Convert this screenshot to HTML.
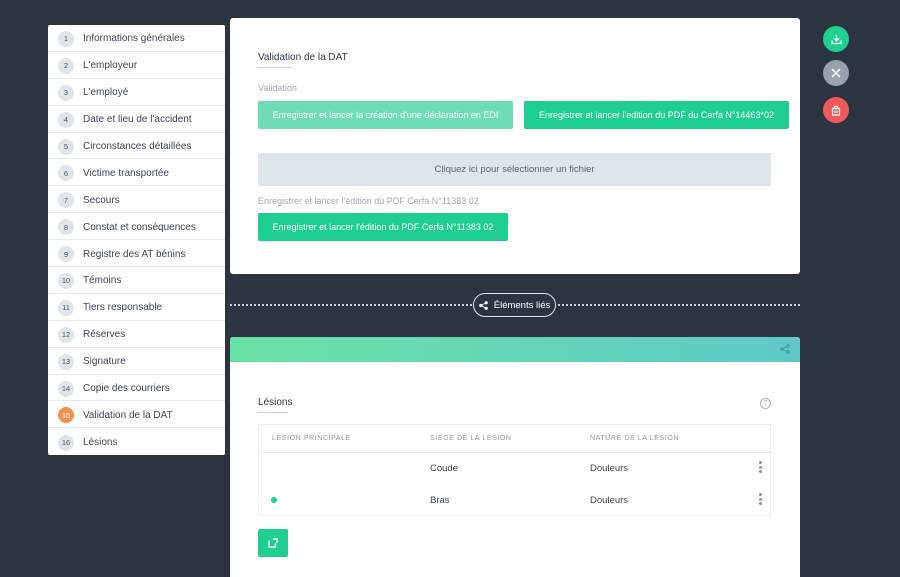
<!DOCTYPE html>
<html><head><style>
*{box-sizing:border-box;margin:0;padding:0}
body{width:900px;height:571px;background:#2c3441;font-family:"Liberation Sans",sans-serif;position:relative;overflow:hidden}
.side{position:absolute;left:48px;top:25px;width:177px;height:430px;background:#fff;border-radius:2px}
.row{height:26.9px;border-bottom:1px solid #e8ecee;display:flex;align-items:center;font-size:10px;color:#3b4656;padding-top:2px}
.row:last-child{border-bottom:none}
.num{width:16px;height:16px;border-radius:50%;background:#dfe6ea;color:#556;font-size:7.5px;display:flex;align-items:center;justify-content:center;margin:0 9px 0 10px}
.num.on{background:#f0914f;color:#fff}
.card{position:absolute;left:230px;width:570px;background:#fff;border-radius:3px}
.a{position:absolute}
.btn{position:absolute;color:#fff;font-size:9px;display:flex;align-items:center;justify-content:center;border-radius:2px}
.fab{position:absolute;left:823px;width:26px;height:26px;border-radius:50%;display:flex;align-items:center;justify-content:center;color:#fff;font-size:13px}
.th{position:absolute;top:435px;font-size:7px;letter-spacing:.6px;color:#8a9aab}
.td{position:absolute;font-size:9.5px;color:#3b4656}
.dots{position:absolute;left:759px;width:3px}
.dots i{display:block;width:3px;height:3px;border-radius:50%;background:#8b95a3;margin-bottom:1.5px}
</style></head><body>
<div class="side">
<div class="row"><span class="num">1</span>Informations générales</div>
<div class="row"><span class="num">2</span>L'employeur</div>
<div class="row"><span class="num">3</span>L'employé</div>
<div class="row"><span class="num">4</span>Date et lieu de l'accident</div>
<div class="row"><span class="num">5</span>Circonstances détaillées</div>
<div class="row"><span class="num">6</span>Victime transportée</div>
<div class="row"><span class="num">7</span>Secours</div>
<div class="row"><span class="num">8</span>Constat et conséquences</div>
<div class="row"><span class="num">9</span>Registre des AT bénins</div>
<div class="row"><span class="num">10</span>Témoins</div>
<div class="row"><span class="num">11</span>Tiers responsable</div>
<div class="row"><span class="num">12</span>Réserves</div>
<div class="row"><span class="num">13</span>Signature</div>
<div class="row"><span class="num">14</span>Copie des courriers</div>
<div class="row"><span class="num on">15</span>Validation de la DAT</div>
<div class="row"><span class="num">16</span>Lésions</div>
</div>

<div class="card" style="top:18px;height:256px"></div>
<div class="a" style="left:258px;top:52px;font-size:10px;color:#2e3a48">Validation de la DAT</div>
<div class="a" style="left:258px;top:67px;width:33px;height:1px;background:#c9d2d8"></div>
<div class="a" style="left:258px;top:83px;font-size:9px;color:#a0aab5">Validation</div>
<div class="btn" style="left:258px;top:101px;width:255px;height:28px;background:#6edcb5">Enregistrer et lancer la création d'une déclaration en EDI</div>
<div class="btn" style="left:524px;top:101px;width:265px;height:28px;background:#1ecf8f">Enregistrer et lancer l'edition du PDF du Cerfa N°14463*02</div>
<div class="a" style="left:258px;top:153px;width:513px;height:33px;background:#dde6e8;display:flex;align-items:center;justify-content:center;font-size:9.5px;color:#5a6673">Cliquez ici pour sélectionner un fichier</div>
<div class="a" style="left:258px;top:196px;font-size:9px;color:#a0aab5">Enregistrer et lancer l'édition du PDF Cerfa N°11383 02</div>
<div class="btn" style="left:258px;top:213px;width:250px;height:28px;background:#1ecf8f">Enregistrer et lancer l'édition du PDF Cerfa N°11383 02</div>

<div class="a" style="left:230px;top:304px;width:570px;border-top:2px dotted #c8ced6"></div>
<div class="a" style="left:473px;top:293px;width:83px;height:24px;border:1.5px solid #dfe3e8;border-radius:12px;background:#2c3441;color:#fff;font-size:9.5px;display:flex;align-items:center;justify-content:center;gap:6px"><svg width="9" height="9" viewBox="0 0 10 10"><circle cx="2" cy="5" r="1.8" fill="#fff"/><circle cx="8" cy="2" r="1.8" fill="#fff"/><circle cx="8" cy="8" r="1.8" fill="#fff"/><path d="M2 5L8 2M2 5L8 8" stroke="#fff"/></svg>Éléments liés</div>

<div class="card" style="top:337px;height:240px;border-radius:3px 3px 0 0;overflow:hidden"><div style="height:25px;background:linear-gradient(90deg,#69e2a6,#5fc8c6)"></div></div>
<svg class="a" style="left:780px;top:344px" width="10" height="10" viewBox="0 0 10 10"><circle cx="2" cy="5" r="1.3" fill="none" stroke="#3d8f9a"/><circle cx="8" cy="2" r="1.3" fill="none" stroke="#3d8f9a"/><circle cx="8" cy="8" r="1.3" fill="none" stroke="#3d8f9a"/><path d="M3 4.5L7 2.5M3 5.5L7 7.5" stroke="#3d8f9a" stroke-width=".8"/></svg>
<div class="a" style="left:258px;top:397px;font-size:10px;color:#2e3a48">Lésions</div>
<div class="a" style="left:258px;top:412px;width:30px;height:1px;background:#c9d2d8"></div>
<div class="a" style="left:760px;top:398px;width:11px;height:11px;border:1px solid #a8b1ba;border-radius:50%;font-size:7px;color:#a8b1ba;text-align:center;line-height:9px">?</div>
<div class="a" style="left:258px;top:424px;width:513px;height:92px;border:1px solid #edf0f2"></div>
<div class="a" style="left:258px;top:452px;width:513px;height:1px;background:#e6eaed"></div>
<div class="th" style="left:272px">LESION PRINCIPALE</div>
<div class="th" style="left:430px">SIEGE DE LA LESION</div>
<div class="th" style="left:590px">NATURE DE LA LESION</div>
<div class="td" style="left:430px;top:463px">Coude</div>
<div class="td" style="left:590px;top:463px">Douleurs</div>
<div class="td" style="left:430px;top:495px">Bras</div>
<div class="td" style="left:590px;top:495px">Douleurs</div>
<div class="a" style="left:271px;top:497px;width:6px;height:6px;border-radius:50%;background:#1ecf8f"></div>
<div class="dots" style="top:461px"><i></i><i></i><i></i></div>
<div class="dots" style="top:493px"><i></i><i></i><i></i></div>
<div class="a" style="left:258px;top:529px;width:30px;height:28px;background:#1ecf8f;border-radius:2px"><svg style="position:absolute;left:10px;top:9px" width="10" height="10" viewBox="0 0 10 10"><path d="M1 2.5V9H7.5V5.5M5 1H9V5" fill="none" stroke="#fff" stroke-width="1.4"/></svg></div>

<div class="fab" style="top:26px;background:#1ecf8f"><svg width="11" height="11" viewBox="0 0 11 11"><path d="M5.5 1V6.5M3 4.5L5.5 7L8 4.5M1 6.5V9.5H10V6.5" fill="none" stroke="#fff" stroke-width="1.3"/></svg></div>
<div class="fab" style="top:60px;background:#9aa1ad"><svg width="10" height="10" viewBox="0 0 10 10"><path d="M1 1L9 9M9 1L1 9" stroke="#fff" stroke-width="1.5"/></svg></div>
<div class="fab" style="top:97px;background:#f05a5a"><svg width="10" height="11" viewBox="0 0 10 11"><path d="M1.5 3.5H8.5V10H1.5ZM3.5 3.5V1.5H6.5V3.5M4 5.5V8M6 5.5V8" fill="none" stroke="#fff" stroke-width="1.2"/></svg></div>
</body></html>
